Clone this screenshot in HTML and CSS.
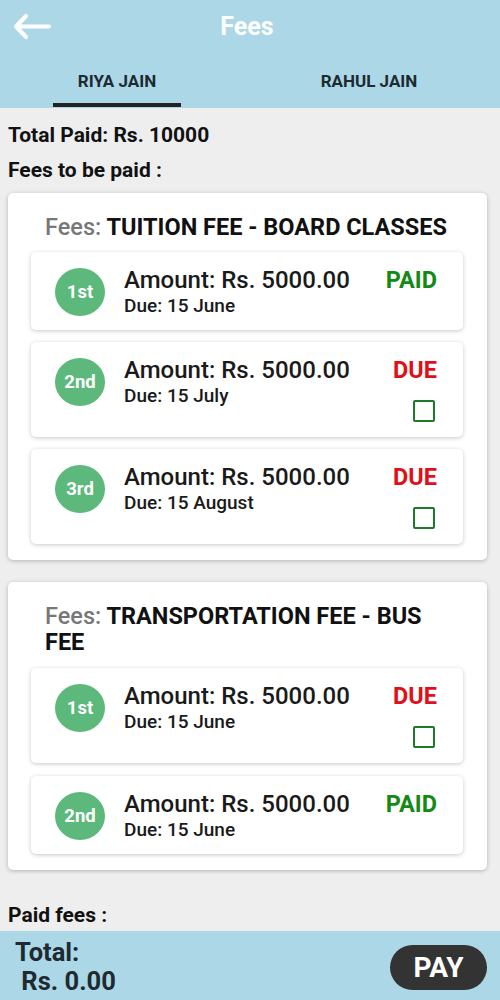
FILE: index.html
```html
<!DOCTYPE html>
<html>
<head>
<meta charset="utf-8">
<link rel="stylesheet" href="styles.css">
</head>
<body>
<div class="app">
  <header class="header">
    <div class="topbar">
      <svg class="back" viewBox="0 0 40 30" width="40" height="30"><path d="M13 4 L3 14.5 L13 25 M3 14.5 H36" fill="none" stroke="#fff" stroke-width="4.2" stroke-linecap="round" stroke-linejoin="round"/></svg>
      <div class="title">Fees</div>
    </div>
    <div class="tabs">
      <div class="tab active"><span>RIYA JAIN</span><i class="indicator"></i></div>
      <div class="tab"><span>RAHUL JAIN</span></div>
    </div>
  </header>
  <main class="content">
    <div class="line">Total Paid: Rs. 10000</div>
    <div class="line">Fees to be paid :</div>

    <section class="card">
      <div class="card-title"><span class="label">Fees:</span> <span>TUITION FEE - BOARD CLASSES</span></div>
      <div class="row">
        <div class="badge">1st</div>
        <div class="info"><div class="amount">Amount: Rs. 5000.00</div><div class="due">Due: 15 June</div></div>
        <div class="status"><div class="paid">PAID</div></div>
      </div>
      <div class="row">
        <div class="badge">2nd</div>
        <div class="info"><div class="amount">Amount: Rs. 5000.00</div><div class="due">Due: 15 July</div></div>
        <div class="status"><div class="unpaid">DUE</div><div class="check"></div></div>
      </div>
      <div class="row">
        <div class="badge">3rd</div>
        <div class="info"><div class="amount">Amount: Rs. 5000.00</div><div class="due">Due: 15 August</div></div>
        <div class="status"><div class="unpaid">DUE</div><div class="check"></div></div>
      </div>
    </section>

    <section class="card card2">
      <div class="card-title"><span class="label">Fees:</span> <span>TRANSPORTATION FEE - BUS</span><br><span>FEE</span></div>
      <div class="row">
        <div class="badge">1st</div>
        <div class="info"><div class="amount">Amount: Rs. 5000.00</div><div class="due">Due: 15 June</div></div>
        <div class="status"><div class="unpaid">DUE</div><div class="check"></div></div>
      </div>
      <div class="row">
        <div class="badge">2nd</div>
        <div class="info"><div class="amount">Amount: Rs. 5000.00</div><div class="due">Due: 15 June</div></div>
        <div class="status"><div class="paid">PAID</div></div>
      </div>
    </section>

    <div class="line paid-fees">Paid fees :</div>
  </main>
  <footer class="footer">
    <div class="total">Total:<br>&nbsp;Rs. 0.00</div>
    <button class="pay">PAY</button>
  </footer>
</div>
</body>
</html>
```

FILE: styles.css
```css
* { box-sizing: border-box; }
html, body { margin: 0; padding: 0; }
body {
  font-family: Roboto, "Noto Sans", sans-serif;
  background: #eeeeee;
  color: #111;
}
.app {
  width: 500px;
  height: 1000px;
  display: flex;
  flex-direction: column;
  overflow: hidden;
}
.header {
  background: #acd7e6;
  height: 108px;
  flex: none;
}
.topbar {
  height: 56px;
  display: flex;
  align-items: center;
  position: relative;
}
.back {
  position: absolute;
  left: 13px;
  top: 12px;
}
.title {
  flex: 1;
  text-align: center;
  color: #fff;
  font-weight: 700;
  font-size: 25px;
  margin-top: -3px;
  margin-left: -6px;
}
.tabs {
  display: flex;
  height: 52px;
}
.tab {
  flex: 1;
  display: flex;
  flex-direction: column;
  align-items: center;
  font-weight: 700;
  font-size: 17px;
  color: #1c2a32;
  padding-top: 14px;
  position: relative;
}
.tab span { line-height: 22px; }
.tab:first-child { margin-left: -9px; }
.tab:last-child { margin-right: 5px; }
.indicator {
  position: absolute;
  bottom: 1px;
  left: 62px;
  width: 128px;
  height: 4px;
  background: #222;
}
.content {
  flex: 1;
  min-height: 0;
  overflow: hidden;
  padding: 15px 13px 0 8px;
}
.line {
  font-weight: 700;
  font-size: 21px;
  line-height: 24px;
  margin-bottom: 11px;
}
.card {
  background: #fff;
  border-radius: 5px;
  box-shadow: 0 1px 4px rgba(0,0,0,0.25);
  padding: 20px 24px 16px 23px;
  display: flex;
  flex-direction: column;
  gap: 12px;
  margin-top: 1px;
}
.card2 { margin-top: 22px; padding-top: 20px; padding-bottom: 16px; gap: 13px; }
.card-title {
  font-weight: 700;
  font-size: 23.5px;
  line-height: 26px;
  padding-left: 14px;
  padding-right: 16px;
  margin-top: 1px;
  color: #111;
}
.label { color: #777; font-weight: 500; }
.row {
  background: #fff;
  border-radius: 5px;
  box-shadow: 0 1px 4px rgba(0,0,0,0.22);
  display: flex;
  align-items: flex-start;
  padding: 14px 26px 12px 24px;
}
.badge {
  width: 50px;
  height: 48px;
  border-radius: 50%;
  background: #5cb87b;
  color: #fff;
  font-weight: 700;
  font-size: 18.5px;
  display: flex;
  align-items: center;
  justify-content: center;
  margin-top: 2px;
  flex: none;
}
.info {
  flex: 1;
  margin-left: 19px;
}
.amount {
  font-weight: 500;
  font-size: 24px;
  line-height: 28px;
  color: #1a1a1a;
}
.due {
  font-weight: 500;
  font-size: 19px;
  line-height: 24px;
  color: #1a1a1a;
}
.status {
  display: flex;
  flex-direction: column;
  align-items: flex-end;
}
.paid, .unpaid {
  font-weight: 700;
  font-size: 23.5px;
  line-height: 28px;
}
.paid { color: #148a14; }
.unpaid { color: #e0101a; }
.check {
  width: 22px;
  height: 22px;
  border: 2px solid #1d7a2a;
  border-radius: 2px;
  margin-top: 16px;
  margin-right: 2px;
  margin-bottom: 3px;
}
.paid-fees { margin-top: 33px; }
.footer {
  background: #acd7e6;
  height: 69px;
  flex: none;
  display: flex;
  align-items: center;
  justify-content: space-between;
  padding: 0 13px 0 15px;
}
.total {
  font-weight: 700;
  font-size: 25.5px;
  line-height: 29px;
  color: #1e2a30;
  margin-top: 3px;
}
.pay {
  width: 97px;
  height: 45px;
  border: none;
  border-radius: 23px;
  background: #333;
  color: #fff;
  font-family: Roboto, "Noto Sans", sans-serif;
  font-weight: 700;
  font-size: 28px;
  margin-top: 3px;
}
```
